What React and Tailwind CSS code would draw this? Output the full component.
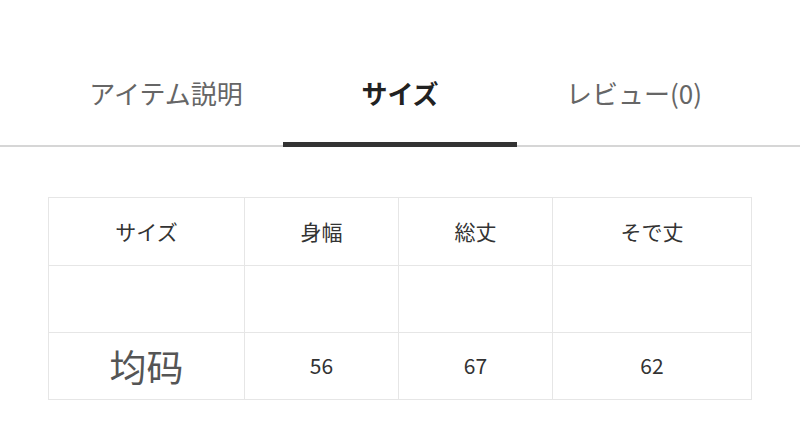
import React, { useState } from 'react';

const tabs = ['アイテム説明', 'サイズ', 'レビュー(0)'];

const headers = ['サイズ', '身幅', '総丈', 'そで丈'];
const values = ['56', '67', '62'];

const App = () => {
  const [active, setActive] = useState(1);

  return (
    <div
      className="w-[800px] h-[444px] bg-white overflow-hidden"
      style={{ fontFamily: '"Noto Sans CJK JP", "Noto Sans", sans-serif' }}
    >
      {/* Tabs */}
      <div className="flex px-[49px] pt-[74px] border-b-2 border-[#d6d6d6]">
        {tabs.map((tab, i) => (
          <button
            key={tab}
            onClick={() => setActive(i)}
            className={`relative flex-1 h-[71px] flex flex-col items-center justify-start text-[26px] leading-[38px] ${
              active === i ? 'font-bold text-[#222]' : 'text-[#666]'
            }`}
          >
            <span>{tab}</span>
            {active === i && (
              <span className="absolute left-0 right-0 bottom-[-2px] h-[5px] bg-[#333]" />
            )}
          </button>
        ))}
      </div>

      {/* Size table */}
      <div className="px-[48px] pt-[50px]">
        <table className="w-[703px] border-collapse table-fixed">
          <colgroup>
            <col className="w-[196px]" />
            <col className="w-[154px]" />
            <col className="w-[154px]" />
            <col className="w-[199px]" />
          </colgroup>
          <tbody>
            <tr className="h-[68px]">
              {headers.map((h) => (
                <td key={h} className="border border-[#e6e6e6] text-center text-[21px] text-[#333]">
                  {h}
                </td>
              ))}
            </tr>
            <tr className="h-[67px]">
              {headers.map((h) => (
                <td key={h} className="border border-[#e6e6e6]" />
              ))}
            </tr>
            <tr className="h-[67px]">
              <td
                className="border border-[#e6e6e6] text-center text-[37px] leading-none text-[#555]"
                style={{ fontFamily: '"Noto Sans CJK SC", sans-serif' }}
              >
                均码
              </td>
              {values.map((v, i) => (
                <td key={i} className="border border-[#e6e6e6] text-center text-[21px] text-[#333]">
                  {v}
                </td>
              ))}
            </tr>
          </tbody>
        </table>
      </div>
    </div>
  );
};

export default App;
